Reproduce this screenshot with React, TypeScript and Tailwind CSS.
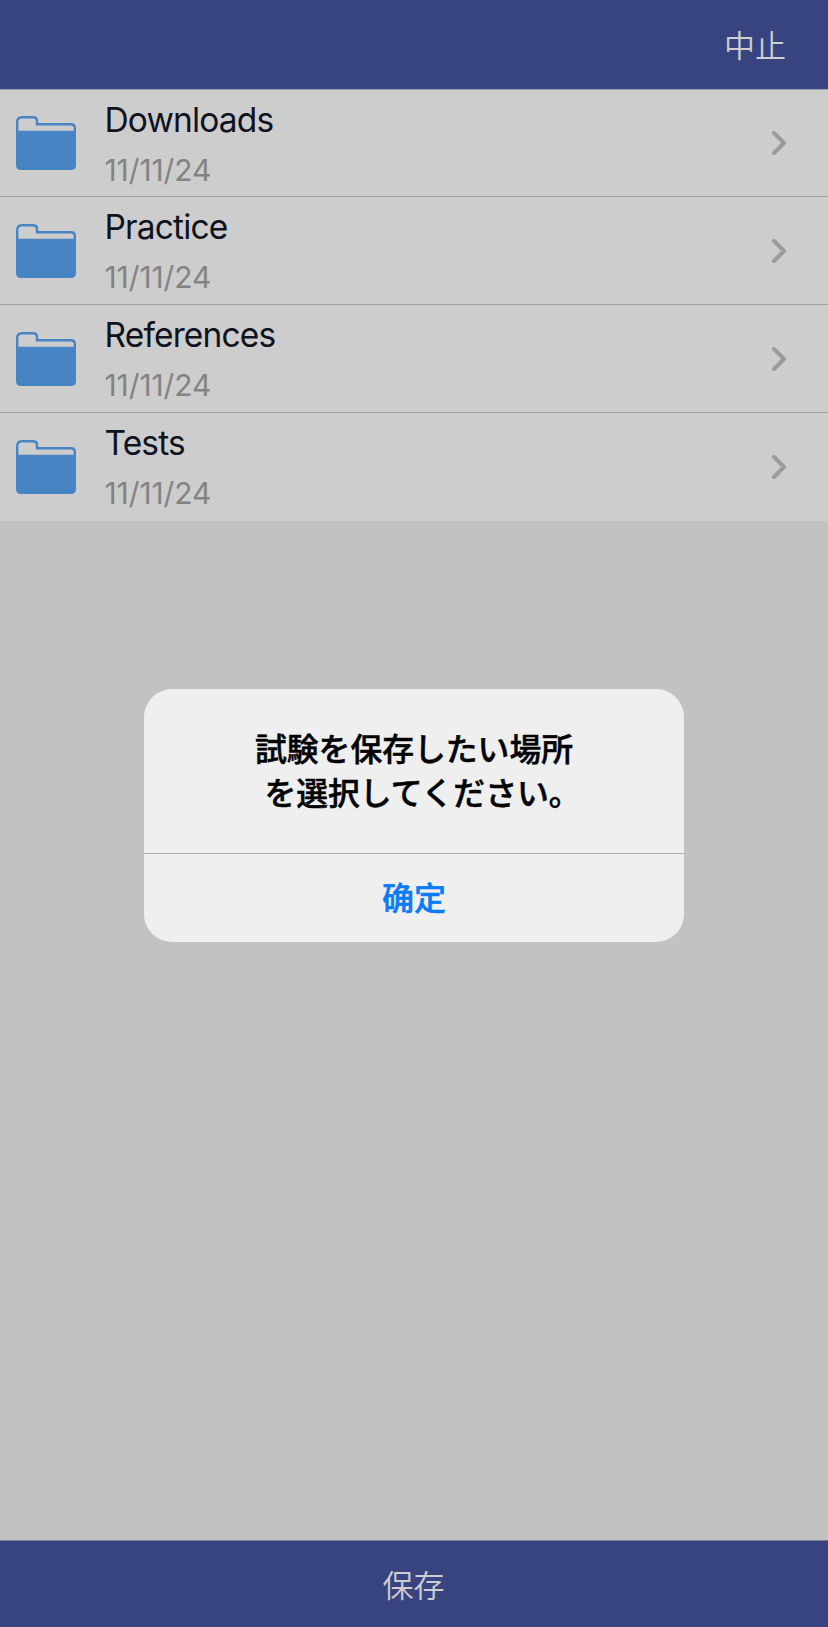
import React from "react";

const folders = [
  { name: "Downloads", date: "11/11/24" },
  { name: "Practice", date: "11/11/24" },
  { name: "References", date: "11/11/24" },
  { name: "Tests", date: "11/11/24" },
];

function FolderIcon() {
  return (
    <svg width="60" height="54" viewBox="0 0 60 54" fill="none">
      <path
        d="M1.200 16V6Q1.200 1.200 6 1.200H17Q21 1.200 21 5V8.200H55Q58.800 8.200 58.800 12V16"
        stroke="#4784c4"
        strokeWidth="2.400"
      />
      <path d="M0 14.700H60V49Q60 54 55 54H5Q0 54 0 49Z" fill="#4784c4" />
    </svg>
  );
}

function Chevron() {
  return (
    <svg width="14" height="24" viewBox="0 0 14 24" fill="none">
      <path
        d="M2 2L12 12L2 22"
        stroke="#9b9b9b"
        strokeWidth="4"
        strokeLinecap="round"
        strokeLinejoin="round"
      />
    </svg>
  );
}

export default function App() {
  return (
    <div className="relative flex h-[1627px] w-[828px] flex-col overflow-hidden bg-[#c2c2c2] font-['Inter','Noto_Sans_CJK_JP',sans-serif]">
      <header className="flex h-[89px] shrink-0 items-center justify-end bg-[#374480] pr-[42px] pb-0.5">
        <button className="font-['Noto_Sans_CJK_JP',sans-serif] text-[31px] leading-[44px] font-[350] text-[#cdcdd2]">
          中止
        </button>
      </header>

      <ul className="border-t border-[#9a9dac] bg-[#cdcdcd]">
        {folders.map((folder) => (
          <li
            key={folder.name}
            className="flex h-[108px] items-center border-b border-[#a0a0a0] pr-[42px] pl-4 first:h-[107px] last:border-[#cdcdcd]"
          >
            <FolderIcon />
            <div className="ml-[28.500px] flex grow flex-col pt-[3px]">
              <span className="text-[33.500px] leading-[50px] tracking-[-0.85px] text-[#0f131e]">
                {folder.name}
              </span>
              <span className="text-[30px] leading-[50px] tracking-[-0.1px] text-[#838383]">
                {folder.date}
              </span>
            </div>
            <Chevron />
          </li>
        ))}
      </ul>

      <footer className="mt-auto flex h-[87px] shrink-0 items-center justify-center border-t border-[#7c7f93] bg-[#374480] pr-px pb-px">
        <button className="font-['Noto_Sans_CJK_SC',sans-serif] text-[31px] leading-[44px] font-[350] text-[#cdcdd2]">
          保存
        </button>
      </footer>

      {/* alert */}
      <div className="absolute top-[689px] left-36 flex h-[253px] w-[540px] flex-col overflow-hidden rounded-[28px] bg-[#efefef]">
        <div className="flex h-[164px] flex-col items-center pt-9 font-['Noto_Sans_CJK_JP',sans-serif] text-[31.800px] leading-[44px] font-medium text-black [-webkit-text-stroke:0.5px_currentColor]">
          <p>試験を保存したい場所</p>
          <p className="pl-[17px]">を選択してください。</p>
        </div>
        <button className="grow border-t border-[#afafaf] pb-1 font-['Noto_Sans_CJK_SC',sans-serif] text-[32px] leading-[44px] font-medium text-[#0b7bf6] [-webkit-text-stroke:0.5px_currentColor]">
          确定
        </button>
      </div>
    </div>
  );
}
